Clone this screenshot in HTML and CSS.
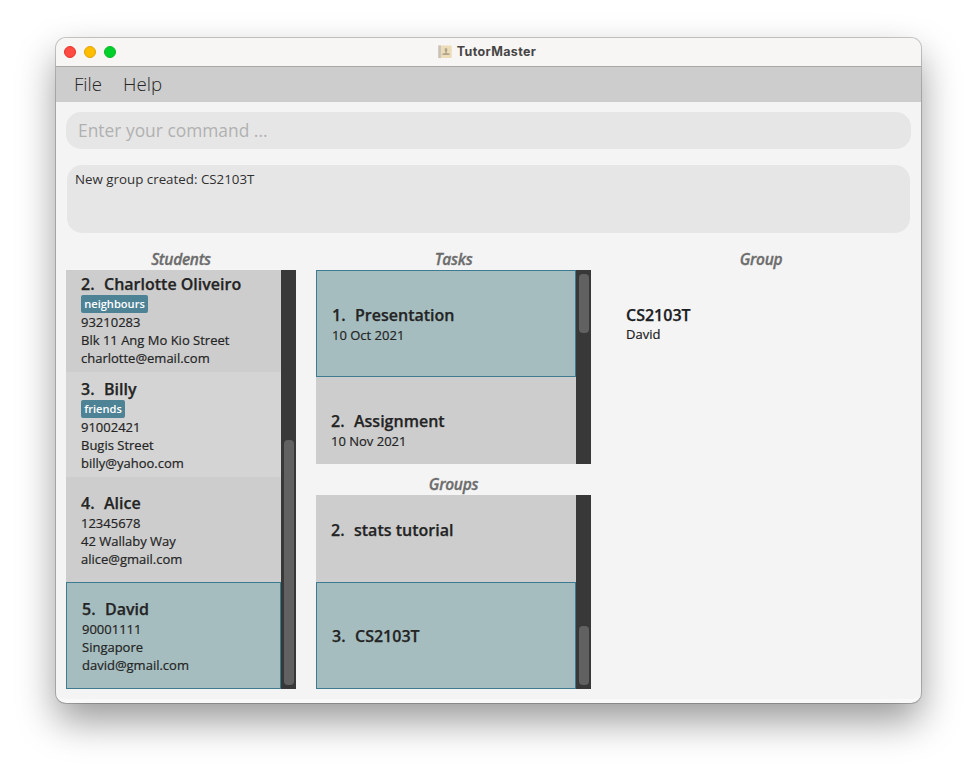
FILE: index.html
```html
<!DOCTYPE html>
<html lang="en">
<head>
<meta charset="utf-8">
<title>TutorMaster</title>
<link rel="stylesheet" href="styles.css">
</head>
<body>
<div class="window">
  <header class="titlebar">
    <div class="lights"><i class="light red"></i><i class="light yellow"></i><i class="light green"></i></div>
    <div class="title">
      <svg width="14" height="14" viewBox="0 0 14 14">
        <rect x="0.3" y="0.5" width="13.4" height="12.6" rx="0.8" fill="#ecdcb8"/>
        <rect x="0.3" y="0.5" width="2.6" height="12.6" fill="#c9c1bb"/>
        <ellipse cx="8" cy="5" rx="1.4" ry="1.9" fill="#b0a58c"/>
        <path d="M7.300 6h1.400v1.900l2.900.7v1.500h-7.200V8.600l2.900-.7z" fill="#b0a58c"/>
      </svg>
      <span>TutorMaster</span>
    </div>
  </header>
  <nav class="menubar"><span>File</span><span>Help</span></nav>
  <main class="content">
    <div class="command">Enter your command ...</div>
    <div class="result">New group created: CS2103T</div>
    <div class="columns">
      <section class="column students">
        <h2>Students</h2>
        <div class="list">
          <div class="items end">
            <div class="item"><div class="name"><span>2.</span>Charlotte Oliveiro</div><div class="tags"><span class="tag">neighbours</span></div><p>93210283</p><p>Blk 11 Ang Mo Kio Street</p><p>charlotte@email.com</p></div>
            <div class="item alt"><div class="name"><span>3.</span>Billy</div><div class="tags"><span class="tag">friends</span></div><p>91002421</p><p>Bugis Street</p><p>billy@yahoo.com</p></div>
            <div class="item"><div class="name"><span>4.</span>Alice</div><p>12345678</p><p>42 Wallaby Way</p><p>alice@gmail.com</p></div>
            <div class="item selected"><div class="name"><span>5.</span>David</div><p>90001111</p><p>Singapore</p><p>david@gmail.com</p></div>
          </div>
          <div class="scroll end"><div class="thumb tall"></div></div>
        </div>
      </section>
      <div class="column middle">
        <section class="tasks">
          <h2>Tasks</h2>
          <div class="list">
            <div class="items">
              <div class="item selected"><div class="name"><span>1.</span>Presentation</div><p>10 Oct 2021</p></div>
              <div class="item"><div class="name"><span>2.</span>Assignment</div><p>10 Nov 2021</p></div>
            </div>
            <div class="scroll"><div class="thumb"></div></div>
          </div>
        </section>
        <section class="groups">
          <h2>Groups</h2>
          <div class="list">
            <div class="items end">
              <div class="item"><div class="name"><span>2.</span>stats tutorial</div></div>
              <div class="item selected"><div class="name"><span>3.</span>CS2103T</div></div>
            </div>
            <div class="scroll end"><div class="thumb"></div></div>
          </div>
        </section>
      </div>
      <section class="column detail">
        <h2>Group</h2>
        <div class="group-card"><div class="name">CS2103T</div><p>David</p></div>
      </section>
    </div>
  </main>
</div>
</body>
</html>
```
FILE: styles.css
```css
* { box-sizing: border-box; }
body {
  margin: 0;
  padding: 38px 56px 74px;
  height: 777px;
  overflow: hidden;
  background: #fff;
  font-family: "Open Sans", sans-serif;
  color: #242424;
}
.window {
  width: 865px;
  height: 665px;
  border-radius: 10px;
  background: #f4f4f4;
  border-bottom: 4px solid #f9f9f9;
  overflow: hidden;
  box-shadow: 0 0 0 1px rgba(0, 0, 0, .2), 0 18px 38px rgba(0, 0, 0, .4);
}
.titlebar {
  height: 29px;
  display: grid;
  grid-template-columns: 1fr auto 1fr;
  align-items: center;
  background: #f7f6f4;
  border-bottom: 1px solid #a7a7a6;
}
.lights { display: flex; gap: 8px; padding-left: 8px; }
.light { width: 12px; height: 12px; border-radius: 50%; border: 1px solid; }
.red { background: #ff4b42; border-color: #e6332c; }
.yellow { background: #ffbd00; border-color: #e0a20b; }
.green { background: #00d02b; border-color: #0db526; }
.title {
  display: flex;
  align-items: center;
  gap: 5px;
  padding-right: 3px;
  font: 700 12.5px/20px Inter, sans-serif;
  letter-spacing: .36px;
  color: #464544;
}
.menubar {
  height: 35px;
  display: flex;
  gap: 21px;
  padding-left: 18px;
  background: #cdcdcd;
  font-size: 18.67px;
  font-weight: 300;
  line-height: 33px;
  color: #262626;
}
.content { padding: 10px; }
.command {
  height: 37px;
  border-radius: 15px;
  background: #e6e6e6;
  padding-left: 12px;
  font-size: 17.4px;
  line-height: 37px;
  color: #b1b1b1;
}
.result {
  height: 68px;
  margin: 16px 1px 15px;
  padding: 5px 8px;
  border-radius: 15px;
  background: #e6e6e6;
  font-size: 13.33px;
  line-height: 18px;
  color: #303030;
}
.columns { display: flex; gap: 20px; }
.students { width: 230px; }
.middle { width: 275px; }
.detail { width: 300px; }
h2 {
  height: 22px;
  margin: 0;
  text-align: center;
  font-size: 15.5px;
  line-height: 22px;
  font-style: italic;
  font-weight: 600;
  letter-spacing: -.3px;
  color: #6c6c6c;
  -webkit-text-stroke: .3px currentColor;
}
.list { display: flex; overflow: hidden; }
.students .list { height: 419px; }
.tasks .list, .groups .list { height: 194px; }
.groups { margin-top: 9px; }
.items { flex: 1; display: flex; flex-direction: column; }
.items.end { justify-content: flex-end; }
.item {
  flex: none;
  height: 105px;
  padding: 1px 15px 0;
  display: flex;
  flex-direction: column;
  justify-content: center;
  background: #cdcdcd;
}
.item.alt { background: #d4d4d4; }
.item.selected { height: 107px; background: #a5bdbf; border: 1px solid #3e7b91; }
.name { font-size: 16px; line-height: 22px; font-weight: 600; white-space: nowrap; -webkit-text-stroke: .25px currentColor; }
.name span { display: inline-block; width: 23px; }
p { margin: 0; font-size: 13px; line-height: 18px; -webkit-text-stroke: .2px currentColor; }
.tags { display: flex; }
.tag {
  height: 18px;
  padding: 0 3.2px;
  border-radius: 2px;
  background: #4e8295;
  color: #fff;
  font-size: 11.1px;
  font-weight: 600;
  line-height: 18px;
}
.scroll { width: 15px; padding: 4px 2px 4px 3px; display: flex; flex-direction: column; background: #383838; }
.scroll.end { justify-content: flex-end; }
.thumb { height: 59px; border-radius: 4px; background: #616161; }
.thumb.tall { height: 245px; }
.group-card { padding: 34px 15px 0; color: #1b201f; }
.group-card p { margin-top: -1px; }
```
